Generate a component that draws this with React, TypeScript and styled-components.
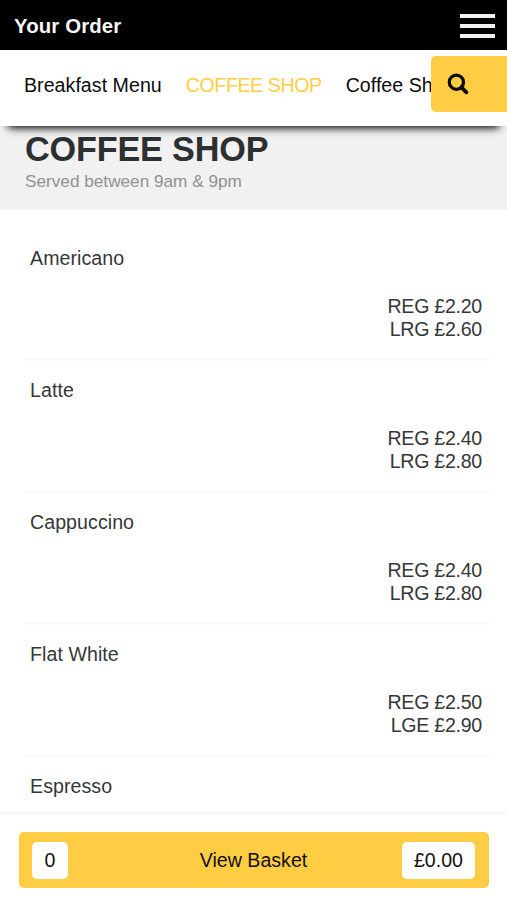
import React from 'react';
import styled, { createGlobalStyle } from 'styled-components';

const GlobalStyle = createGlobalStyle`
  *, *::before, *::after { box-sizing: border-box; }
  body {
    margin: 0;
    background: #fff;
    font-family: "Liberation Sans", Arial, Helvetica, sans-serif;
    font-size: 19.6px;
    color: #353738;
  }
  button { font: inherit; color: inherit; border: 0; padding: 0; background: none; }
  h1, h2, p, ul { margin: 0; padding: 0; }
`;

const Screen = styled.div`
  display: flex;
  flex-direction: column;
  height: 900px;
  overflow: hidden;
`;

const TopBar = styled.header`
  flex: none;
  display: flex;
  align-items: center;
  justify-content: space-between;
  height: 50px;
  padding: 2px 12px 0 14px;
  background: #000;
  color: #f8f8f8;
`;

const TopTitle = styled.h1`
  font-size: 20.4px;
  line-height: 24px;
  font-weight: 700;
  letter-spacing: 0.12px;
`;

const MenuButton = styled.button`
  display: flex;
  flex-direction: column;
  gap: 6.4px;
  width: 35px;
`;

const MenuBar = styled.span`
  height: 4px;
  background: #f0f0f0;
`;

const CategoryBar = styled.nav`
  position: relative;
  z-index: 1;
  flex: none;
  display: flex;
  height: 76px;
  padding-left: 24px;
  background: #fff;
  box-shadow: 0 10px 8px -8px #000;
`;

const Categories = styled.div`
  flex: 1;
  min-width: 0;
  display: flex;
  gap: 24px;
  padding-top: 23px;
  overflow: hidden;
  white-space: nowrap;
  line-height: 24px;
`;

const Category = styled.span<{ $active?: boolean }>`
  flex: none;
  color: ${({ $active }) => ($active ? '#ffce44' : '#0c0c0c')};
  letter-spacing: ${({ $active }) => ($active ? '-0.42px' : '0.04px')};
`;

const SearchButton = styled.button`
  flex: none;
  display: flex;
  align-items: center;
  width: 76px;
  height: 56px;
  margin-top: 6px;
  padding-left: 16px;
  border-radius: 5px 0 0 5px;
  background: #ffcd43;
`;

const SectionHead = styled.section`
  flex: none;
  height: 84px;
  padding: 3px 25px 0;
  background: #f1f1f1;
`;

const SectionTitle = styled.h2`
  font-size: 34.2px;
  line-height: 40px;
  font-weight: 700;
  letter-spacing: -0.15px;
  color: #2d2f30;
`;

const SectionNote = styled.p`
  margin-top: 2px;
  font-size: 17.2px;
  line-height: 21px;
  color: #909192;
`;

const ItemList = styled.ul`
  flex: 1;
  min-height: 0;
  overflow: hidden;
  padding: 19px 18px 0 24px;
  list-style: none;
`;

const Item = styled.li`
  height: 132px;
  padding: 18px 7px 0 6px;
  border-bottom: 3px solid #f9f9f9;
`;

const ItemName = styled.p`
  line-height: 23px;
  letter-spacing: 0.06px;
`;

const Prices = styled.div`
  margin-top: 25px;
  text-align: right;
  line-height: 23px;
  letter-spacing: -0.27px;
`;

const BasketBar = styled.footer`
  flex: none;
  height: 88px;
  padding: 18px 18px 0 19px;
  border-top: 2px solid #f4f4f4;
  background: #fff;
`;

const BasketButton = styled.button`
  display: grid;
  grid-template-columns: 73px 1fr 73px;
  align-items: center;
  width: 100%;
  height: 56px;
  padding: 0 14px 0 13px;
  border-radius: 5px;
  background: #ffcd43;
  color: #111;
`;

const Chip = styled.span<{ $width: number }>`
  width: ${({ $width }) => $width}px;
  height: 37px;
  line-height: 37px;
  border-radius: 5px;
  background: #fff;
  text-align: center;
`;

const BasketLabel = styled.span`
  padding-top: 1px;
`;

const items = [
  { name: 'Americano', prices: ['REG £2.20', 'LRG £2.60'] },
  { name: 'Latte', prices: ['REG £2.40', 'LRG £2.80'] },
  { name: 'Cappuccino', prices: ['REG £2.40', 'LRG £2.80'] },
  { name: 'Flat White', prices: ['REG £2.50', 'LGE £2.90'] },
  { name: 'Espresso', prices: [] },
];

const SearchIcon = () => (
  <svg width="22" height="22" viewBox="0 0 22 22" fill="none" stroke="#0b0a05">
    <circle cx="9.4" cy="9.2" r="7.1" strokeWidth="3.2" />
    <path d="M14.4 14.3l5 5" strokeWidth="3.8" strokeLinecap="round" />
  </svg>
);

export default function App() {
  return (
    <Screen>
      <GlobalStyle />
      <TopBar>
        <TopTitle>Your Order</TopTitle>
        <MenuButton aria-label="Menu">
          <MenuBar />
          <MenuBar />
          <MenuBar />
        </MenuButton>
      </TopBar>
      <CategoryBar>
        <Categories>
          <Category>Breakfast Menu</Category>
          <Category $active>COFFEE SHOP</Category>
          <Category>Coffee Shop</Category>
        </Categories>
        <SearchButton aria-label="Search">
          <SearchIcon />
        </SearchButton>
      </CategoryBar>
      <SectionHead>
        <SectionTitle>COFFEE SHOP</SectionTitle>
        <SectionNote>Served between 9am &amp; 9pm</SectionNote>
      </SectionHead>
      <ItemList>
        {items.map((item) => (
          <Item key={item.name}>
            <ItemName>{item.name}</ItemName>
            <Prices>
              {item.prices.map((price) => (
                <p key={price}>{price}</p>
              ))}
            </Prices>
          </Item>
        ))}
      </ItemList>
      <BasketBar>
        <BasketButton>
          <Chip $width={36}>0</Chip>
          <BasketLabel>View Basket</BasketLabel>
          <Chip $width={73}>£0.00</Chip>
        </BasketButton>
      </BasketBar>
    </Screen>
  );
}
